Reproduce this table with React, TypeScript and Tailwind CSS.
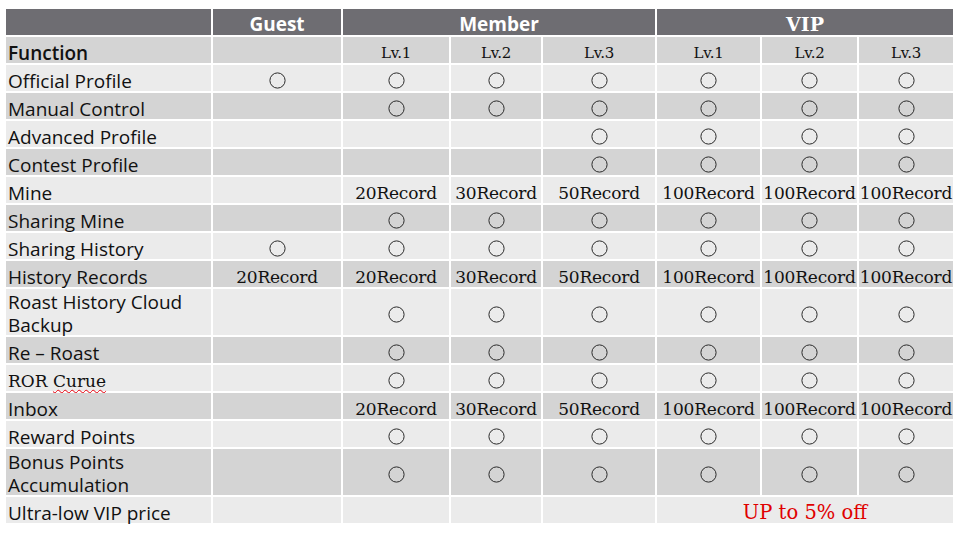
import React from "react"

type Cell = "" | "o" | string

type Row = {
  label: React.ReactNode
  cells: Cell[]
  tall?: boolean
  bold?: boolean
  small?: boolean
}

const O = "o"
const all = (): Cell[] => [O, O, O, O, O, O]

const rows: Row[] = [
  { label: "Function", bold: true, small: true, cells: ["", "Lv.1", "Lv.2", "Lv.3", "Lv.1", "Lv.2", "Lv.3"] },
  { label: "Official Profile", cells: [O, ...all()] },
  { label: "Manual Control", cells: ["", ...all()] },
  { label: "Advanced Profile", cells: ["", "", "", O, O, O, O] },
  { label: "Contest Profile", cells: ["", "", "", O, O, O, O] },
  { label: "Mine", cells: ["", "20Record", "30Record", "50Record", "100Record", "100Record", "100Record"] },
  { label: "Sharing Mine", cells: ["", ...all()] },
  { label: "Sharing History", cells: [O, ...all()] },
  { label: "History Records", cells: ["20Record", "20Record", "30Record", "50Record", "100Record", "100Record", "100Record"] },
  { label: <>Roast History Cloud<br />Backup</>, tall: true, cells: ["", ...all()] },
  { label: "Re – Roast", cells: ["", ...all()] },
  {
    label: (
      <span className="font-['DejaVu_Serif',serif] text-[17px]">
        ROR <span className="underline decoration-wavy decoration-red-600 decoration-1 underline-offset-[2px]">Curue</span>
      </span>
    ),
    cells: ["", ...all()],
  },
  { label: "Inbox", cells: ["", "20Record", "30Record", "50Record", "100Record", "100Record", "100Record"] },
  { label: "Reward Points", cells: ["", ...all()] },
  { label: <>Bonus Points<br />Accumulation</>, tall: true, cells: ["", ...all()] },
]

function Circle() {
  return (
    <svg width="17" height="17" viewBox="0 0 17 17" className="block">
      <circle cx="8.5" cy="8.5" r="7.6" fill="none" stroke="#2b2b2b" strokeWidth="1" />
    </svg>
  )
}

function ValueCell({ value, bg, small }: { value: Cell; bg: string; small?: boolean }) {
  return (
    <div className={`${bg} flex items-center justify-center pt-[5px] leading-[20px] font-['DejaVu_Serif',serif] text-[#111] ${small ? "text-[15px]" : "text-[17px]"} tracking-[-0.2px] whitespace-nowrap`}>
      {value === O ? <Circle /> : value}
    </div>
  )
}

export default function App() {
  return (
    <div className="w-[958px] h-[534px] bg-white pt-[9px] pl-[6px] font-['Open_Sans',sans-serif]">
      <div className="grid grid-cols-[205px_128px_106px_90px_112px_103px_95px_94px] gap-[2px]">
        {/* header */}
        <div className="bg-[#6e6d72] h-[26px]" />
        <div className="bg-[#6e6d72] h-[26px] pt-[4px] leading-[20px] flex items-center justify-center text-white font-bold text-[19px]">Guest</div>
        <div className="bg-[#6e6d72] h-[26px] pt-[4px] leading-[20px] col-span-3 flex items-center justify-center text-white font-bold text-[19px]">Member</div>
        <div className="bg-[#6e6d72] h-[26px] pt-[4px] leading-[20px] col-span-3 flex items-center justify-center text-white font-bold text-[19px] font-['DejaVu_Serif',serif]">VIP</div>

        {rows.map((row, i) => {
          const bg = i % 2 === 0 ? "bg-[#d4d4d4]" : "bg-[#ebebeb]"
          return (
            <React.Fragment key={i}>
              <div
                className={`${bg} ${row.tall ? "h-[46px] pt-[3px] leading-[23px]" : "h-[26px] pt-[5px] leading-[20px]"} flex items-center pl-[2px] text-[19px] text-[#111] ${row.bold ? "font-semibold" : ""}`}
              >
                <div>{row.label}</div>
              </div>
              {row.cells.map((c, j) => (
                <ValueCell key={j} value={c} bg={bg} small={row.small} />
              ))}
            </React.Fragment>
          )
        })}

        {/* last row */}
        <div className="bg-[#ebebeb] h-[26px] pt-[5px] leading-[20px] flex items-center pl-[2px] text-[19px] text-[#111]">Ultra-low VIP price</div>
        <div className="bg-[#ebebeb]" />
        <div className="bg-[#ebebeb]" />
        <div className="bg-[#ebebeb]" />
        <div className="bg-[#ebebeb]" />
        <div className="bg-[#ebebeb] col-span-3 pt-[5px] leading-[20px] flex items-center justify-center font-['DejaVu_Serif',serif] text-[19.5px] text-[#e00000]">
          UP to 5% off
        </div>
      </div>
    </div>
  )
}
